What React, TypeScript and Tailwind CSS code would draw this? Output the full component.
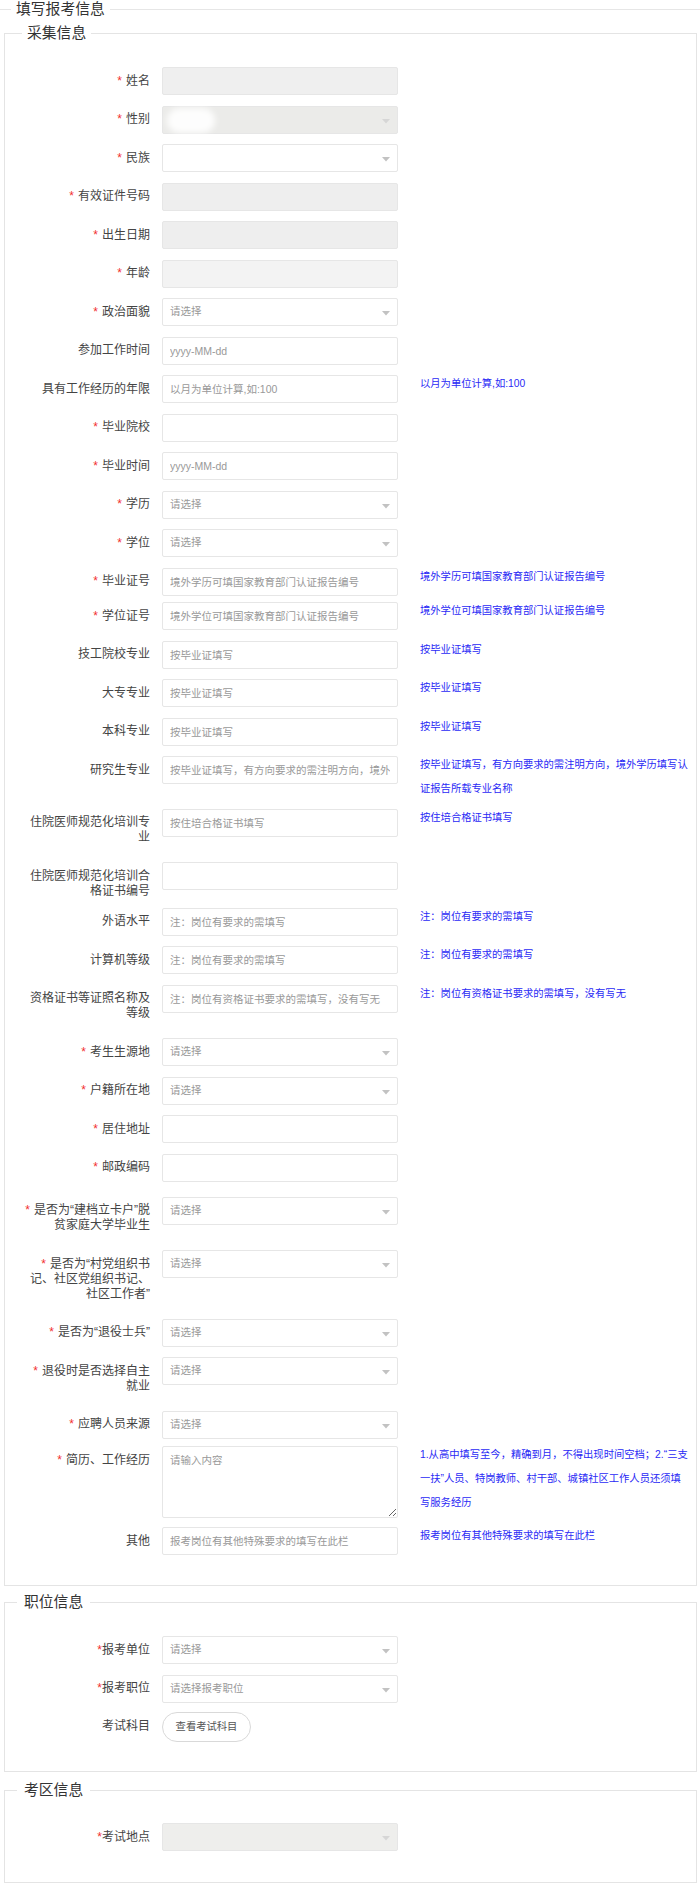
import React from "react";

type Field = {
  label: string[];
  req?: boolean;
  tight?: boolean;
  kind: "input" | "select" | "textarea" | "button";
  ph?: string;
  disabled?: boolean;
  bg?: string;
  hint?: string[];
  mb?: string;
  blob?: boolean;
};

const basic: Field[] = [
  { label: ["姓名"], req: true, kind: "input", disabled: true, bg: "bg-[#efefef]" },
  { label: ["性别"], req: true, kind: "select", disabled: true, bg: "bg-[#ebebe9]", blob: true },
  { label: ["民族"], req: true, kind: "select" },
  { label: ["有效证件号码"], req: true, kind: "input", disabled: true, bg: "bg-[#eeeeee]" },
  { label: ["出生日期"], req: true, kind: "input", disabled: true, bg: "bg-[#eeeeee]" },
  { label: ["年龄"], req: true, kind: "input", disabled: true, bg: "bg-[#f3f3f3]" },
  { label: ["政治面貌"], req: true, kind: "select", ph: "请选择" },
  { label: ["参加工作时间"], kind: "input", ph: "yyyy-MM-dd" },
  { label: ["具有工作经历的年限"], kind: "input", ph: "以月为单位计算,如:100", hint: ["以月为单位计算,如:100"] },
  { label: ["毕业院校"], req: true, kind: "input" },
  { label: ["毕业时间"], req: true, kind: "input", ph: "yyyy-MM-dd" },
  { label: ["学历"], req: true, kind: "select", ph: "请选择" },
  { label: ["学位"], req: true, kind: "select", ph: "请选择" },
  {
    label: ["毕业证号"],
    req: true,
    kind: "input",
    ph: "境外学历可填国家教育部门认证报告编号",
    hint: ["境外学历可填国家教育部门认证报告编号"],
    mb: "mb-[6.5px]",
  },
  {
    label: ["学位证号"],
    req: true,
    kind: "input",
    ph: "境外学位可填国家教育部门认证报告编号",
    hint: ["境外学位可填国家教育部门认证报告编号"],
  },
  { label: ["技工院校专业"], kind: "input", ph: "按毕业证填写", hint: ["按毕业证填写"] },
  { label: ["大专专业"], kind: "input", ph: "按毕业证填写", hint: ["按毕业证填写"] },
  { label: ["本科专业"], kind: "input", ph: "按毕业证填写", hint: ["按毕业证填写"] },
  {
    label: ["研究生专业"],
    kind: "input",
    ph: "按毕业证填写，有方向要求的需注明方向，境外学历填写认证报告所载专业名称",
    hint: ["按毕业证填写，有方向要求的需注明方向，境外学历填写认", "证报告所载专业名称"],
  },
  {
    label: ["住院医师规范化培训专", "业"],
    kind: "input",
    ph: "按住培合格证书填写",
    hint: ["按住培合格证书填写"],
  },
  { label: ["住院医师规范化培训合", "格证书编号"], kind: "input", mb: "mb-[2.5px]" },
  { label: ["外语水平"], kind: "input", ph: "注：岗位有要求的需填写", hint: ["注：岗位有要求的需填写"] },
  { label: ["计算机等级"], kind: "input", ph: "注：岗位有要求的需填写", hint: ["注：岗位有要求的需填写"] },
  {
    label: ["资格证书等证照名称及", "等级"],
    kind: "input",
    ph: "注：岗位有资格证书要求的需填写，没有写无",
    hint: ["注：岗位有资格证书要求的需填写，没有写无"],
  },
  { label: ["考生生源地"], req: true, kind: "select", ph: "请选择" },
  { label: ["户籍所在地"], req: true, kind: "select", ph: "请选择" },
  { label: ["居住地址"], req: true, kind: "input" },
  { label: ["邮政编码"], req: true, kind: "input", mb: "mb-[15px]" },
  { label: ["是否为“建档立卡户”脱", "贫家庭大学毕业生"], req: true, kind: "select", ph: "请选择" },
  {
    label: ["是否为“村党组织书", "记、社区党组织书记、", "社区工作者”"],
    req: true,
    kind: "select",
    ph: "请选择",
  },
  { label: ["是否为“退役士兵”"], req: true, kind: "select", ph: "请选择" },
  { label: ["退役时是否选择自主", "就业"], req: true, kind: "select", ph: "请选择" },
  { label: ["应聘人员来源"], req: true, kind: "select", ph: "请选择", mb: "mb-[7.5px]" },
  {
    label: ["简历、工作经历"],
    req: true,
    kind: "textarea",
    ph: "请输入内容",
    hint: [
      "1.从高中填写至今，精确到月，不得出现时间空档；2.“三支",
      "一扶”人员、特岗教师、村干部、城镇社区工作人员还须填",
      "写服务经历",
    ],
    mb: "mb-[9px]",
  },
  {
    label: ["其他"],
    kind: "input",
    ph: "报考岗位有其他特殊要求的填写在此栏",
    hint: ["报考岗位有其他特殊要求的填写在此栏"],
    mb: "mb-0",
  },
];

const post: Field[] = [
  { label: ["报考单位"], req: true, tight: true, kind: "select", ph: "请选择" },
  { label: ["报考职位"], req: true, tight: true, kind: "select", ph: "请选择报考职位", mb: "mb-[9.5px]" },
  { label: ["考试科目"], kind: "button", ph: "查看考试科目", mb: "mb-0" },
];

const area: Field[] = [
  { label: ["考试地点"], req: true, tight: true, kind: "select", disabled: true, bg: "bg-[#eeeeec]", mb: "mb-0" },
];

function Arrow({ light }: { light?: boolean }) {
  return (
    <svg
      className="absolute right-[7px] top-[12px]"
      width="8"
      height="5"
      viewBox="0 0 8 5"
    >
      <path d="M0 0 L8 0 L4 4.5 Z" fill={light ? "#d6d6d6" : "#c2c2c2"} />
    </svg>
  );
}

function Control({ f }: { f: Field }) {
  if (f.kind === "button") {
    return (
      <button
        type="button"
        className="flex h-[30px] w-[89px] items-center justify-center rounded-full border border-[#d9d9d9] bg-white text-[10.3px] text-[#555]"
      >
        {f.ph}
      </button>
    );
  }
  if (f.kind === "textarea") {
    return (
      <textarea
        placeholder={f.ph}
        className="block h-[72px] w-[236px] shrink-0 rounded-[2px] border border-[#e6e6e6] bg-white px-[7px] py-[5px] text-[10.5px] leading-[16px] text-[#333] outline-none placeholder:text-[#999]"
      />
    );
  }
  if (f.kind === "select") {
    return (
      <div
        className={`relative flex h-[28px] w-[236px] shrink-0 items-center rounded-[2px] border border-[#e6e6e6] px-[7px] text-[10.5px] text-[#999] ${
          f.bg ?? "bg-white"
        }`}
      >
        {f.blob && (
          <span className="absolute left-[4px] top-[1px] h-[25px] w-[48px] rounded-full bg-white/90 blur-[3px]" />
        )}
        <span className="relative">{f.ph ?? ""}</span>
        <Arrow light={f.disabled} />
      </div>
    );
  }
  return (
    <input
      placeholder={f.ph}
      disabled={f.disabled}
      className={`block h-[28px] w-[236px] shrink-0 rounded-[2px] border border-[#e6e6e6] px-[7px] text-[10.5px] text-[#333] outline-none placeholder:text-[#999] ${
        f.bg ?? "bg-white"
      }`}
    />
  );
}

function Row({ f }: { f: Field }) {
  return (
    <div className={`flex items-start ${f.mb ?? "mb-[10.5px]"}`}>
      <div className="w-[157px] shrink-0 pb-[6.5px] pr-[12px] pt-[6.5px] text-right text-[12px] leading-[15px] text-[#444]">
        {f.label.map((line, i) => (
          <div key={i} className="whitespace-nowrap">
            {i === 0 && f.req && (
              <span className={`text-[#f23030] ${f.tight ? "mr-0" : "mr-[4px]"}`}>*</span>
            )}
            {line}
          </div>
        ))}
      </div>
      <Control f={f} />
      {f.hint && (
        <div className="-my-[3px] ml-[22px] whitespace-nowrap text-[10.3px] leading-[24px] text-[#2a2af5]">
          {f.hint.map((line, i) => (
            <div key={i}>{line}</div>
          ))}
        </div>
      )}
    </div>
  );
}

export default function App() {
  return (
    <div className="w-[700px] bg-white pb-[15px] font-['Liberation_Sans','Noto_Sans_CJK_SC',sans-serif] text-[#333]">
      <fieldset className="m-0 min-w-0 border-0 border-t border-solid border-[#e6e6e6] p-0">
        <legend className="ml-[11px] px-[5px] text-[14.8px] leading-[18px] text-[#333]">
          填写报考信息
        </legend>

        <fieldset className="ml-[4px] mr-[3px] mt-[6px] min-w-0 border border-solid border-[#e4e4e4] px-0 pb-[30px] pt-[25px]">
          <legend className="ml-[17px] px-[5px] text-[14.8px] leading-[18px] text-[#333]">
            采集信息
          </legend>
          {basic.map((f, i) => (
            <Row key={i} f={f} />
          ))}
        </fieldset>

        <fieldset className="ml-[4px] mr-[3px] mt-[7px] min-w-0 border border-solid border-[#e4e4e4] px-0 pb-[29px] pt-[25px]">
          <legend className="ml-[12px] px-[7px] text-[14.8px] leading-[18px] text-[#333]">
            职位信息
          </legend>
          {post.map((f, i) => (
            <Row key={i} f={f} />
          ))}
        </fieldset>

        <fieldset className="ml-[4px] mr-[3px] mt-[9px] min-w-0 border border-solid border-[#e4e4e4] px-0 pb-[31px] pt-[24px]">
          <legend className="ml-[12px] px-[7px] text-[14.8px] leading-[18px] text-[#333]">
            考区信息
          </legend>
          {area.map((f, i) => (
            <Row key={i} f={f} />
          ))}
        </fieldset>
      </fieldset>
    </div>
  );
}
